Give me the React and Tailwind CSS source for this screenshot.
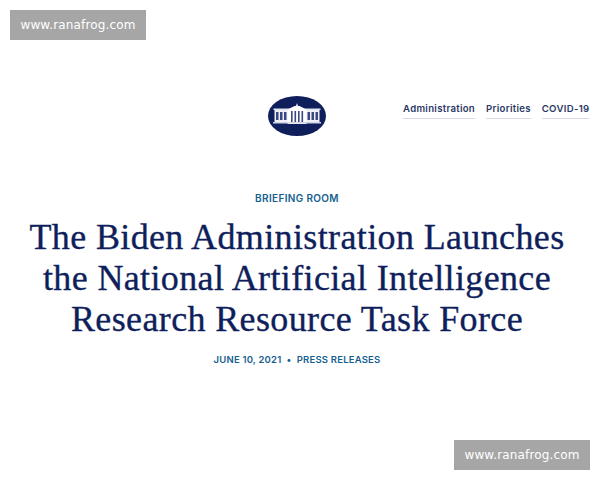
import React from "react";

const sans = "font-['Inter',sans-serif]";

const Logo = () => (
  <svg width="58" height="40" viewBox="0 0 58 40">
    <ellipse cx="29" cy="20" rx="29" ry="20" fill="#0f1f5c" />
    {/* wings */}
    <rect x="5.500" y="12.500" width="47" height="1.500" fill="#dfe3ee" />
    <rect x="6.500" y="14" width="45" height="12" fill="#eef0f6" />
    {/* portico */}
    <path d="M29 7l1 3h1.500l7 3.500V28h-19V13.500l7-3.500H28z" fill="#ffffff" />
    <rect x="5" y="26" width="48" height="1.500" fill="#cfd5e5" />
    <g fill="#3a4780">
      <rect x="8" y="16" width="2.500" height="8" />
      <rect x="12" y="16" width="2.500" height="8" />
      <rect x="16" y="16" width="2.500" height="8" />
      <rect x="39.500" y="16" width="2.500" height="8" />
      <rect x="43.500" y="16" width="2.500" height="8" />
      <rect x="47.500" y="16" width="2.500" height="8" />
      <rect x="23" y="15" width="1.600" height="11" />
      <rect x="26.500" y="15" width="1.600" height="11" />
      <rect x="30" y="15" width="1.600" height="11" />
      <rect x="33.500" y="15" width="1.600" height="11" />
    </g>
  </svg>
);

const NavLink = ({ children }) => (
  <a className={`${sans} border-b border-[#d5dae5] pb-[3px] text-[9.6px] leading-[13px] font-semibold tracking-[0.3px] text-[#2a3866]`}>
    {children}
  </a>
);

const Watermark = ({ className }) => (
  <div className={`absolute flex h-[30px] w-[136px] items-center justify-center bg-[#a6a6a6] font-['DejaVu_Sans',sans-serif] text-[12px] tracking-[0.15px] text-white ${className}`}>
    www.ranafrog.com
  </div>
);

export default function App() {
  return (
    <div className="relative h-[480px] w-[600px] overflow-hidden bg-white">
      <Watermark className="top-[10px] left-[10px]" />
      <Watermark className="right-[10px] bottom-[10px]" />

      <header className="flex items-start pt-[96px] pl-[268px]">
        <Logo />
        <nav className="ml-[77px] flex gap-[11px] pt-[6px]">
          <NavLink>Administration</NavLink>
          <NavLink>Priorities</NavLink>
          <NavLink>COVID-19</NavLink>
        </nav>
      </header>

      <main className="flex flex-col items-center pt-[56px] pr-[6px] text-center">
        <p className={`${sans} text-[10px] leading-[13px] font-semibold tracking-[0.35px] text-[#16608f]`}>BRIEFING ROOM</p>
        <h1 className="mt-[12px] font-['Liberation_Serif',serif] text-[36px] leading-[41px] tracking-[0.37px] text-[#0f1f5c] [-webkit-text-stroke:0.35px_#0f1f5c]">
          The Biden Administration Launches
          <br />
          the National Artificial Intelligence
          <br />
          Research Resource Task Force
        </h1>
        <p className={`${sans} mt-[13px] text-[9.5px] leading-[13px] font-semibold tracking-[0.2px] text-[#16608f]`}>
          JUNE 10, 2021&nbsp; •&nbsp; PRESS RELEASES
        </p>
      </main>
    </div>
  );
}
